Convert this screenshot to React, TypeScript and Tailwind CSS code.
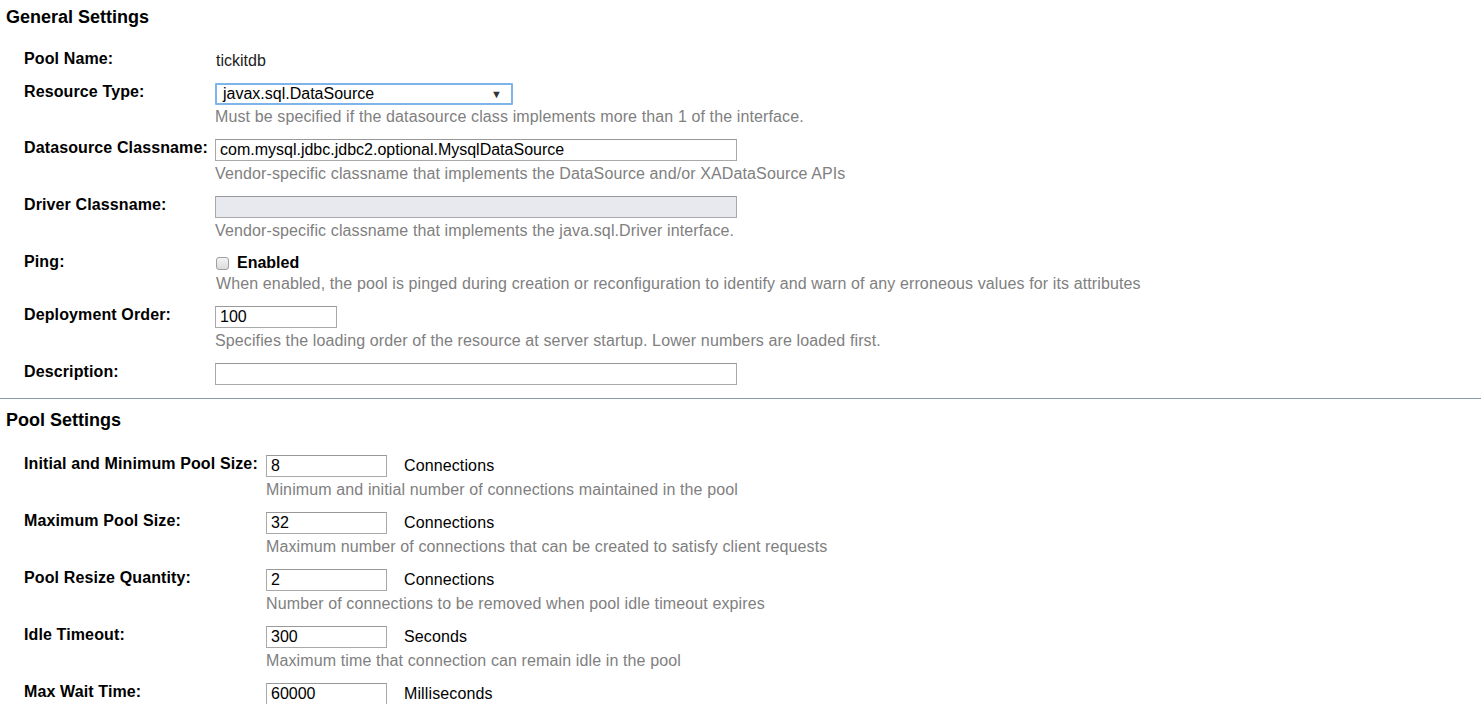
import React from 'react';

const font = { fontFamily: '"Liberation Sans", Arial, sans-serif' };

const Help = ({ children, mt = 'mt-[3px]' }: { children: React.ReactNode; mt?: string }) => (
  <div className={`text-[16px] leading-[20px] tracking-[0.12px] text-[#808080] whitespace-nowrap ${mt}`}>{children}</div>
);

const TextBox = ({ value = '', width, disabled = false }: { value?: string; width: string; disabled?: boolean }) => (
  <div
    className={`${width} h-[22px] border border-[#a9a9a9] border-t-[#999] px-[4px] text-[16px] leading-[20px] text-black ${
      disabled ? 'bg-[#e8e9ee]' : 'bg-white'
    }`}
  >
    {value}
  </div>
);

const Row = ({ label, labelWidth, children }: { label: string; labelWidth: string; children: React.ReactNode }) => (
  <div className="flex items-start">
    <div
      className={`${labelWidth} shrink-0 text-[16px] leading-[20px] tracking-[0.12px] font-bold text-black -mt-[1px] whitespace-nowrap`}
    >
      {label}
    </div>
    <div className="flex flex-col">{children}</div>
  </div>
);

const poolRows = [
  { label: 'Initial and Minimum Pool Size:', value: '8', unit: 'Connections', help: 'Minimum and initial number of connections maintained in the pool' },
  { label: 'Maximum Pool Size:', value: '32', unit: 'Connections', help: 'Maximum number of connections that can be created to satisfy client requests' },
  { label: 'Pool Resize Quantity:', value: '2', unit: 'Connections', help: 'Number of connections to be removed when pool idle timeout expires' },
  { label: 'Idle Timeout:', value: '300', unit: 'Seconds', help: 'Maximum time that connection can remain idle in the pool' },
  { label: 'Max Wait Time:', value: '60000', unit: 'Milliseconds', help: '' },
];

const App = () => {
  return (
    <div className="w-[1481px] h-[704px] overflow-hidden bg-white text-black" style={font}>
      {/* General Settings */}
      <div className="px-[6px] pt-[6px]">
        <h2 className="text-[18px] leading-[22px] font-bold">General Settings</h2>
      </div>
      <div className="pl-[24px] pt-[22px] flex flex-col gap-[12px]">
        <Row label="Pool Name:" labelWidth="w-[192px]">
          <div className="text-[16px] leading-[20px] text-[#222] mt-[1px]">tickitdb</div>
        </Row>
        <Row label="Resource Type:" labelWidth="w-[191px]">
          <div className="w-[298px] h-[22px] border-2 border-[#7eb4ea] rounded-[1px] bg-white flex items-center justify-between pl-[6px] pr-[9px] text-[16px] leading-[20px]">
            <span>javax.sql.DataSource</span>
            <span className="text-[11px] leading-none text-[#333]">▼</span>
          </div>
          <Help mt="mt-[2px]">Must be specified if the datasource class implements more than 1 of the interface.</Help>
        </Row>
        <Row label="Datasource Classname:" labelWidth="w-[191px]">
          <TextBox value="com.mysql.jdbc.jdbc2.optional.MysqlDataSource" width="w-[522px]" />
          <Help>Vendor-specific classname that implements the DataSource and/or XADataSource APIs</Help>
        </Row>
        <Row label="Driver Classname:" labelWidth="w-[191px]">
          <TextBox width="w-[522px]" disabled />
          <Help>Vendor-specific classname that implements the java.sql.Driver interface.</Help>
        </Row>
        <Row label="Ping:" labelWidth="w-[192px]">
          <div className="h-[20px] flex items-center gap-[8px]">
            <span className="w-[13px] h-[13px] rounded-[3px] border border-[#a0a0a0] bg-gradient-to-b from-[#f4f4f4] to-[#dcdcdc]" />
            <span className="text-[16px] leading-[20px] font-bold">Enabled</span>
          </div>
          <Help mt="mt-[1px]">
            When enabled, the pool is pinged during creation or reconfiguration to identify and warn of any erroneous values for its attributes
          </Help>
        </Row>
        <Row label="Deployment Order:" labelWidth="w-[191px]">
          <TextBox value="100" width="w-[122px]" />
          <Help>Specifies the loading order of the resource at server startup. Lower numbers are loaded first.</Help>
        </Row>
        <Row label="Description:" labelWidth="w-[191px]">
          <TextBox width="w-[522px]" />
        </Row>
      </div>

      <div className="mt-[13px] h-px bg-[#8a9aab]" />

      {/* Pool Settings */}
      <div className="px-[6px] pt-[10px]">
        <h2 className="text-[18px] leading-[22px] font-bold">Pool Settings</h2>
      </div>
      <div className="pl-[24px] pt-[24px] flex flex-col gap-[12px]">
        {poolRows.map((r) => (
          <Row key={r.label} label={r.label} labelWidth="w-[242px]">
            <div className="flex items-center">
              <TextBox value={r.value} width="w-[121px]" />
              <span className="ml-[17px] text-[16px] leading-[20px] tracking-[0.12px]">{r.unit}</span>
            </div>
            {r.help && <Help>{r.help}</Help>}
          </Row>
        ))}
      </div>
    </div>
  );
};

export default App;
